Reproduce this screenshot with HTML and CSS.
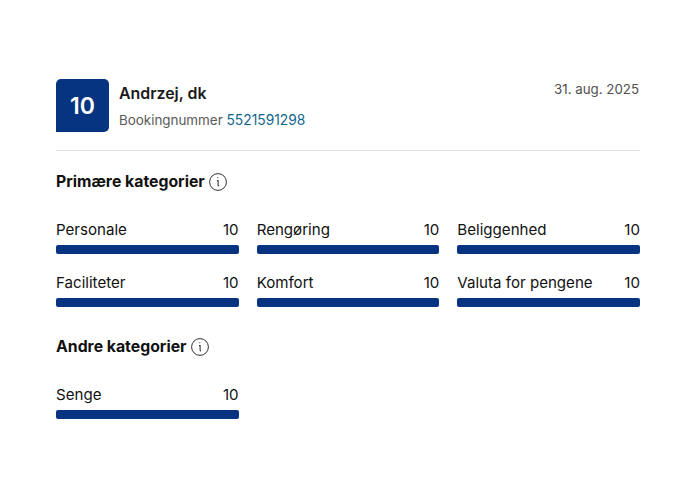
FILE: index.html
```html
<!DOCTYPE html>
<html lang="da">
<head>
<meta charset="utf-8">
<title>Anmeldelse</title>
<link rel="stylesheet" href="styles.css">
</head>
<body>
<main class="page">
  <header class="head">
    <div class="score">10</div>
    <div class="who">
      <div class="name">Andrzej, dk</div>
      <div class="booking">Bookingnummer <span class="num">5521591298</span></div>
    </div>
    <div class="date">31. aug. 2025</div>
  </header>
  <section class="primary">
    <h2 class="title">Primære kategorier
      <svg class="info" viewBox="0 0 18 18" width="18" height="18"><circle cx="9" cy="9" r="8.4" fill="none" stroke="#333" stroke-width="1"/><path d="M8.3 4.8h1M8 7.6h1.1v4.4q0 1 1 1" fill="none" stroke="#333" stroke-width="1.05"/></svg>
    </h2>
    <div class="grid">
      <div class="cat"><div class="row"><span>Personale</span><span>10</span></div><div class="bar"></div></div>
      <div class="cat"><div class="row"><span>Rengøring</span><span>10</span></div><div class="bar"></div></div>
      <div class="cat"><div class="row"><span>Beliggenhed</span><span>10</span></div><div class="bar"></div></div>
      <div class="cat"><div class="row"><span>Faciliteter</span><span>10</span></div><div class="bar"></div></div>
      <div class="cat"><div class="row"><span>Komfort</span><span>10</span></div><div class="bar"></div></div>
      <div class="cat"><div class="row"><span>Valuta for pengene</span><span>10</span></div><div class="bar"></div></div>
    </div>
  </section>
  <section class="other">
    <h2 class="title">Andre kategorier
      <svg class="info" viewBox="0 0 18 18" width="18" height="18"><circle cx="9" cy="9" r="8.4" fill="none" stroke="#333" stroke-width="1"/><path d="M8.3 4.8h1M8 7.6h1.1v4.4q0 1 1 1" fill="none" stroke="#333" stroke-width="1.05"/></svg>
    </h2>
    <div class="grid">
      <div class="cat"><div class="row"><span>Senge</span><span>10</span></div><div class="bar"></div></div>
    </div>
  </section>
</main>
</body>
</html>
```
FILE: styles.css
```css
html, body { margin: 0; padding: 0; background: #fff; }
body { width: 700px; height: 500px; overflow: hidden; font-family: Inter, "Liberation Sans", sans-serif; color: #111; }
.page { padding: 79px 60px 0 56px; }
.head { display: flex; align-items: flex-start; padding-bottom: 18px; border-bottom: 1px solid #e4e4e4; }
.score { width: 53px; height: 53px; background: #073481; color: #fff; border-radius: 5px 5px 5px 0; display: flex; align-items: center; justify-content: center; font-size: 23px; font-weight: 600; }
.who { flex: 1; padding-left: 10px; }
.name { font-size: 15.9px; font-weight: 600; line-height: 22px; margin-top: 4px; color: #1a1a1a; }
.booking { font-size: 13.4px; line-height: 18px; margin-top: 6px; color: #595959; }
.num { font-size: 13.8px; color: #11658c; }
.date { font-size: 13.3px; line-height: 18px; color: #4f4f4f; margin-top: 1px; margin-right: 1px; }
.title { display: flex; align-items: center; gap: 4px; margin: 0; font-size: 15.8px; font-weight: 650; line-height: 20px; color: #111; }
.primary { padding-top: 21px; }
.other { padding-top: 30px; }
.grid { display: grid; grid-template-columns: repeat(3, 1fr); gap: 18px; margin-top: 27px; }
.row { display: flex; justify-content: space-between; font-size: 15.1px; line-height: 20px; padding-top: 1px; margin-bottom: 5px; color: #111; }
.bar { height: 9px; background: #073481; border-radius: 2px; }
.info { flex: none; }
```
